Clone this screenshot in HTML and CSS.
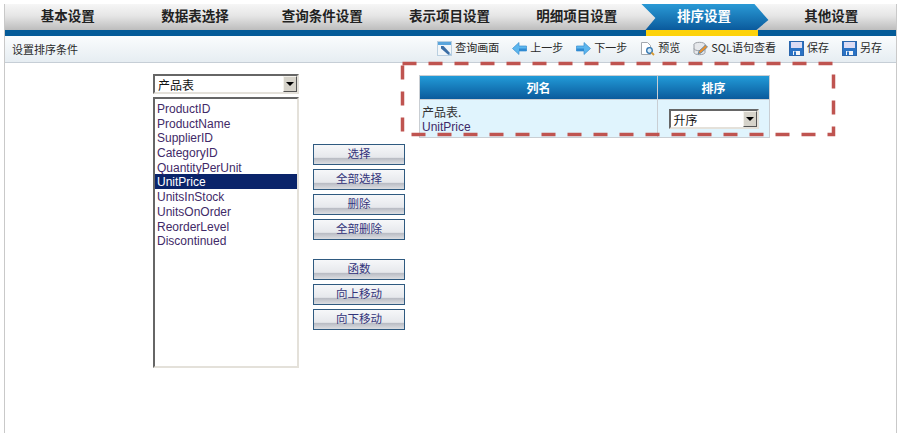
FILE: index.html
```html
<!DOCTYPE html>
<html lang="zh-CN">
<head>
    <meta charset="UTF-8">
    <meta name="viewport" content="width=device-width, initial-scale=1.0">
    <title>排序设置</title>
    <link rel="stylesheet" href="styles.css">
</head>
<body>

    <div class="frame">
        <div class="tabs">
            <div class="tab">基本设置</div>
            <div class="tab">数据表选择</div>
            <div class="tab">查询条件设置</div>
            <div class="tab">表示项目设置</div>
            <div class="tab">明细项目设置</div>
            <div class="tab active">排序设置</div>
            <div class="tab">其他设置</div>
        </div>
        <div class="blue-bar"><div class="marker"></div></div>

        <div class="toolbar">
            <div class="toolbar-title">设置排序条件</div>
            <div class="tools">
                <div class="tool">
                    <svg width="15" height="15" viewBox="0 0 15 15"><rect x="0.500" y="0.500" width="14" height="14" fill="#f2f6f9" stroke="#b9cfe0"/><rect x="1" y="1" width="13" height="3" fill="#5aa5dc"/><path d="M4 5h2.500l6.500 7-1.500 2L4 7.500z" fill="#3b6ea5"/><path d="M11.500 14l1.500-2 1 2z" fill="#7fb2dd"/></svg>
                    <span>查询画面</span>
                </div>
                <div class="tool">
                    <svg width="15" height="15" viewBox="0 0 15 15"><path d="M0.500 7.500L7 1.500v3.500h7.500v5H7v3.500z" fill="#5cb6ee" stroke="#3a8fd0" stroke-width="0.700"/><path d="M7 7.500h7.500v2.500H7z" fill="#2f8ad2"/></svg>
                    <span>上一步</span>
                </div>
                <div class="tool">
                    <svg width="15" height="15" viewBox="0 0 15 15"><path d="M14.500 7.500L8 1.500v3.500H0.500v5H8v3.500z" fill="#5cb6ee" stroke="#3a8fd0" stroke-width="0.700"/><path d="M0.500 7.500H8v2.500H0.500z" fill="#2f8ad2"/></svg>
                    <span>下一步</span>
                </div>
                <div class="tool">
                    <svg width="15" height="15" viewBox="0 0 15 15"><path d="M1.500 1.500h6l3 3v9h-9z" fill="#fff" stroke="#a3a8ae"/><circle cx="9.500" cy="9.500" r="2.800" fill="#d6ecfa" stroke="#2f74b0" stroke-width="1.300"/><path d="M11.500 11.500l2.500 2.500" stroke="#d79a35" stroke-width="1.800"/></svg>
                    <span>预览</span>
                </div>
                <div class="tool">
                    <svg width="15" height="15" viewBox="0 0 15 15"><ellipse cx="6.500" cy="3.500" rx="5.500" ry="2.200" fill="#e6e8eb" stroke="#9a9ea4"/><path d="M1 3.500v8c0 1.300 2.500 2.200 5.500 2.200S12 12.800 12 11.500v-8" fill="#e6e8eb" stroke="#9a9ea4"/><path d="M1 7.500c0 1.300 2.500 2.200 5.500 2.200" fill="none" stroke="#9a9ea4"/><path d="M5 13l1-3 6.500-6 2 2-6.500 6z" fill="#e88f2e" stroke="#3f7fb5" stroke-width="0.700"/></svg>
                    <span>SQL语句查看</span>
                </div>
                <div class="tool">
                    <svg width="15" height="15" viewBox="0 0 15 15"><rect x="0.500" y="0.500" width="14" height="14" fill="#2a72c4" stroke="#2a66ad"/><rect x="2" y="1" width="11" height="6" fill="#dcdcf4"/><rect x="4" y="10" width="7" height="4" fill="#f4f6f9"/><rect x="5" y="10.500" width="2" height="3.500" fill="#2a72c4"/></svg>
                    <span>保存</span>
                </div>
                <div class="tool">
                    <svg width="15" height="15" viewBox="0 0 15 15"><rect x="0.500" y="0.500" width="14" height="14" fill="#2a72c4" stroke="#2a66ad"/><rect x="2" y="1" width="11" height="6" fill="#dcdcf4"/><rect x="4" y="10" width="7" height="4" fill="#f4f6f9"/><rect x="5" y="10.500" width="2" height="3.500" fill="#2a72c4"/></svg>
                    <span>另存</span>
                </div>
            </div>
        </div>

        <div class="content">
            <div class="picker">
                <div class="combo">
                    <span class="combo-text">产品表</span>
                    <span class="combo-arrow"></span>
                </div>
                <div class="listbox">
                    <div class="option">ProductID</div>
                    <div class="option">ProductName</div>
                    <div class="option">SupplierID</div>
                    <div class="option">CategoryID</div>
                    <div class="option">QuantityPerUnit</div>
                    <div class="option selected">UnitPrice</div>
                    <div class="option">UnitsInStock</div>
                    <div class="option">UnitsOnOrder</div>
                    <div class="option">ReorderLevel</div>
                    <div class="option">Discontinued</div>
                </div>
            </div>

            <div class="actions">
                <div class="btn">选择</div>
                <div class="btn">全部选择</div>
                <div class="btn">删除</div>
                <div class="btn">全部删除</div>
                <div class="btn btn-spaced">函数</div>
                <div class="btn">向上移动</div>
                <div class="btn">向下移动</div>
            </div>

            <table class="sort-table">
                <tr>
                    <th class="col-name">列名</th>
                    <th>排序</th>
                </tr>
                <tr>
                    <td class="col-name">产品表.<br><span class="field">UnitPrice</span></td>
                    <td>
                        <div class="combo combo-small">
                            <span class="combo-text">升序</span>
                            <span class="combo-arrow"></span>
                        </div>
                    </td>
                </tr>
            </table>
        </div>
    </div>

    <!-- annotation drawn over the screenshot -->
    <svg class="highlight" width="440" height="80" viewBox="0 0 440 80">
        <rect x="3.500" y="3.500" width="431" height="71" fill="none" stroke="#bf5450" stroke-width="3.500" stroke-dasharray="14 12"/>
    </svg>

</body>
</html>
```

FILE: styles.css
```css
body {
    font-family: "Liberation Sans", "Noto Sans CJK SC", sans-serif;
    background-color: #fff;
    margin: 0;
    padding: 0;
}

.frame {
    position: relative;
    width: 891px;
    height: 429px;
    margin: 4px 0 0 4px;
    border-left: 1px solid #c9c9c9;
    border-right: 1px solid #c9c9c9;
    overflow: hidden;
}

.tabs {
    display: grid;
    grid-template-columns: repeat(7, 1fr);
    height: 26px;
    background: linear-gradient(#f6f6f6, #e6e6e6 45%, #bdbdbd);
}

.tab {
    font-family: "Noto Sans CJK SC", sans-serif;
    font-size: 13.5px;
    font-weight: bold;
    line-height: 22px;
    padding-right: 2px;
    text-align: center;
    color: #222;
}

.tab.active {
    color: #fff;
    background: linear-gradient(#2a9ad6, #0a5a9c);
    clip-path: polygon(0 0, 113px 0, 127px 16px, 115px 26px, 4px 26px, 14px 14px);
}

.blue-bar {
    height: 6px;
    background-color: #045b98;
    display: flex;
    padding-left: 641px;
}

.marker {
    width: 112px;
    background-color: #fdd20a;
}

.toolbar {
    height: 26px;
    display: flex;
    align-items: center;
    justify-content: space-between;
    padding: 0 14px 0 7px;
    background: linear-gradient(#fafcfd, #e6edf2);
    border-bottom: 1px solid #c6ced6;
    font-family: "Noto Sans CJK SC", sans-serif;
    font-size: 11px;
    color: #2a2a2a;
}

.tools {
    display: flex;
    gap: 13px;
}

.tool {
    display: flex;
    align-items: center;
    gap: 3px;
}

.tool svg {
    margin-bottom: 2px;
}

.tool span {
    padding-bottom: 4px;
}

.content {
    display: flex;
    align-items: flex-start;
    padding: 11px 0 0 148px;
}

.picker {
    width: 146px;
}

.combo {
    display: flex;
    justify-content: space-between;
    box-sizing: border-box;
    height: 20px;
    background-color: #fff;
    border: 2px solid;
    border-color: #666 #e4e1da #e4e1da #666;
    font-family: "Noto Sans CJK SC", sans-serif;
    font-size: 12px;
    line-height: 17px;
    color: #111;
}

.combo-text {
    padding-left: 3px;
}

.combo-arrow {
    position: relative;
    width: 14px;
    background-color: #d6d3ca;
    border: 1px solid;
    border-color: #f4f2ec #555 #555 #f4f2ec;
    box-sizing: border-box;
}

.combo-arrow::after {
    content: "";
    position: absolute;
    left: 2px;
    top: 5px;
    border: 4px solid transparent;
    border-top-color: #000;
    border-bottom-width: 0;
}

.listbox {
    box-sizing: border-box;
    height: 271px;
    margin-top: 3px;
    padding-top: 2px;
    background-color: #fff;
    border: 2px solid;
    border-color: #666 #e4e1da #e4e1da #666;
}

.option {
    height: 14.7px;
    line-height: 16.7px;
    padding-left: 2px;
    font-size: 12px;
    color: #3f2a68;
}

.option.selected {
    background-color: #0a246a;
    color: #fff;
}

.actions {
    display: flex;
    flex-direction: column;
    gap: 4px;
    width: 92px;
    margin: 70px 0 0 14px;
}

.btn {
    box-sizing: border-box;
    height: 21px;
    border: 1px solid #2f5a80;
    background: linear-gradient(#f6f7f9, #e6e8ec 65%, #b9bcc4 70%, #dcdee2);
    font-family: "Noto Sans CJK SC", sans-serif;
    font-size: 11.5px;
    line-height: 17px;
    text-align: center;
    color: #33337a;
}

.btn-spaced {
    margin-top: 15px;
}

.sort-table {
    width: 351px;
    margin: 1px 0 0 14px;
    border-collapse: separate;
    border-spacing: 1px;
    background-color: #c9ced3;
    font-size: 12px;
}

.sort-table th {
    box-sizing: border-box;
    height: 23px;
    padding: 0;
    background: linear-gradient(#229bd8, #0a5a9c);
    font-family: "Noto Sans CJK SC", sans-serif;
    font-size: 12px;
    color: #fff;
}

.sort-table td {
    box-sizing: border-box;
    height: 37px;
    padding: 1px 2px 0;
    background-color: #e0f4fd;
    font-family: "Noto Sans CJK SC", sans-serif;
    line-height: 14px;
    color: #333;
}

.sort-table .col-name {
    width: 237px;
}

.field {
    font-family: "Liberation Sans", sans-serif;
    color: #3f2a68;
}

.combo-small {
    width: 90px;
    margin: 0 auto;
}

.highlight {
    position: absolute;
    left: 399px;
    top: 60px;
}
```
